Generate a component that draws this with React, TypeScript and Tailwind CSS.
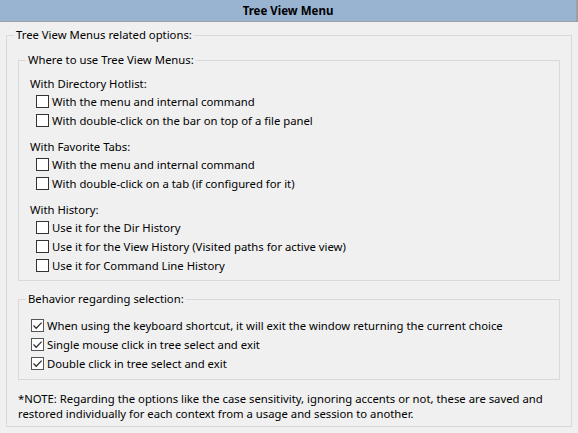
import React from "react";

function Box({ checked }: { checked?: boolean }) {
  return (
    <span
      className={
        checked
          ? "w-[13px] h-[13px] shrink-0 border border-[#555555] bg-white flex items-center justify-center"
          : "w-[13px] h-[13px] shrink-0 border border-[#333333] bg-white flex items-center justify-center"
      }
    >
      {checked && (
        <svg width="11" height="11" viewBox="0 0 11 11">
          <path d="M1.5 5.5 L4.2 8.2 L9.6 2.6" stroke="#333333" strokeWidth="1.3" fill="none" />
        </svg>
      )}
    </span>
  );
}

function Row({ label, checked, indent }: { label: string; checked?: boolean; indent?: boolean }) {
  return (
    <div className={indent ? "flex items-center h-[19px] ml-[6px] gap-[3px]" : "flex items-center h-[19px] ml-[1px] gap-[3px]"}>
      <Box checked={checked} />
      <span className="leading-[16px] whitespace-nowrap">{label}</span>
    </div>
  );
}

function Label({ text, first }: { text: string; first?: boolean }) {
  return <div className={first ? "h-[16px] leading-[16px]" : "h-[16px] leading-[16px] mt-[9px]"}>{text}</div>;
}

export default function App() {
  return (
    <div className="w-[578px] h-[433px] bg-[#f0f0f0] text-[11.3px] text-black font-['Noto_Sans',sans-serif] overflow-hidden">
      <div className="h-[22px] bg-[#99b4d1] border-b border-r-2 border-[#a0a0a0] flex items-center justify-center font-bold text-[11.5px] leading-[21px]">
        Tree View Menu
      </div>
      <fieldset className="mt-[5px] ml-[6px] w-[566px] border border-[#d9d9d9] px-[11px] pt-[9px] pb-[5px]">
        <legend className="ml-[-4px] px-[2px] leading-[16px]">Tree View Menus related options:</legend>
        <fieldset className="border border-[#d9d9d9] px-[11px] pt-[8px] pb-[5px]">
          <legend className="ml-[-4px] px-[2px] leading-[16px]">Where to use Tree View Menus:</legend>
          <Label text="With Directory Hotlist:" first />
          <Row indent label="With the menu and internal command" />
          <Row indent label="With double-click on the bar on top of a file panel" />
          <Label text="With Favorite Tabs:" />
          <Row indent label="With the menu and internal command" />
          <Row indent label="With double-click on a tab (if configured for it)" />
          <Label text="With History:" />
          <Row indent label="Use it for the Dir History" />
          <Row indent label="Use it for the View History (Visited paths for active view)" />
          <Row indent label="Use it for Command Line History" />
        </fieldset>
        <fieldset className="mt-[10px] border border-[#d9d9d9] px-[11px] pt-[9px] pb-[6px]">
          <legend className="ml-[-4px] px-[2px] leading-[16px]">Behavior regarding selection:</legend>
          <Row checked label="When using the keyboard shortcut, it will exit the window returning the current choice" />
          <Row checked label="Single mouse click in tree select and exit" />
          <Row checked label="Double click in tree select and exit" />
        </fieldset>
        <div className="mt-[11px] leading-[15px] whitespace-nowrap">
          *NOTE: Regarding the options like the case sensitivity, ignoring accents or not, these are saved and
          <br />
          restored individually for each context from a usage and session to another.
        </div>
      </fieldset>
    </div>
  );
}
